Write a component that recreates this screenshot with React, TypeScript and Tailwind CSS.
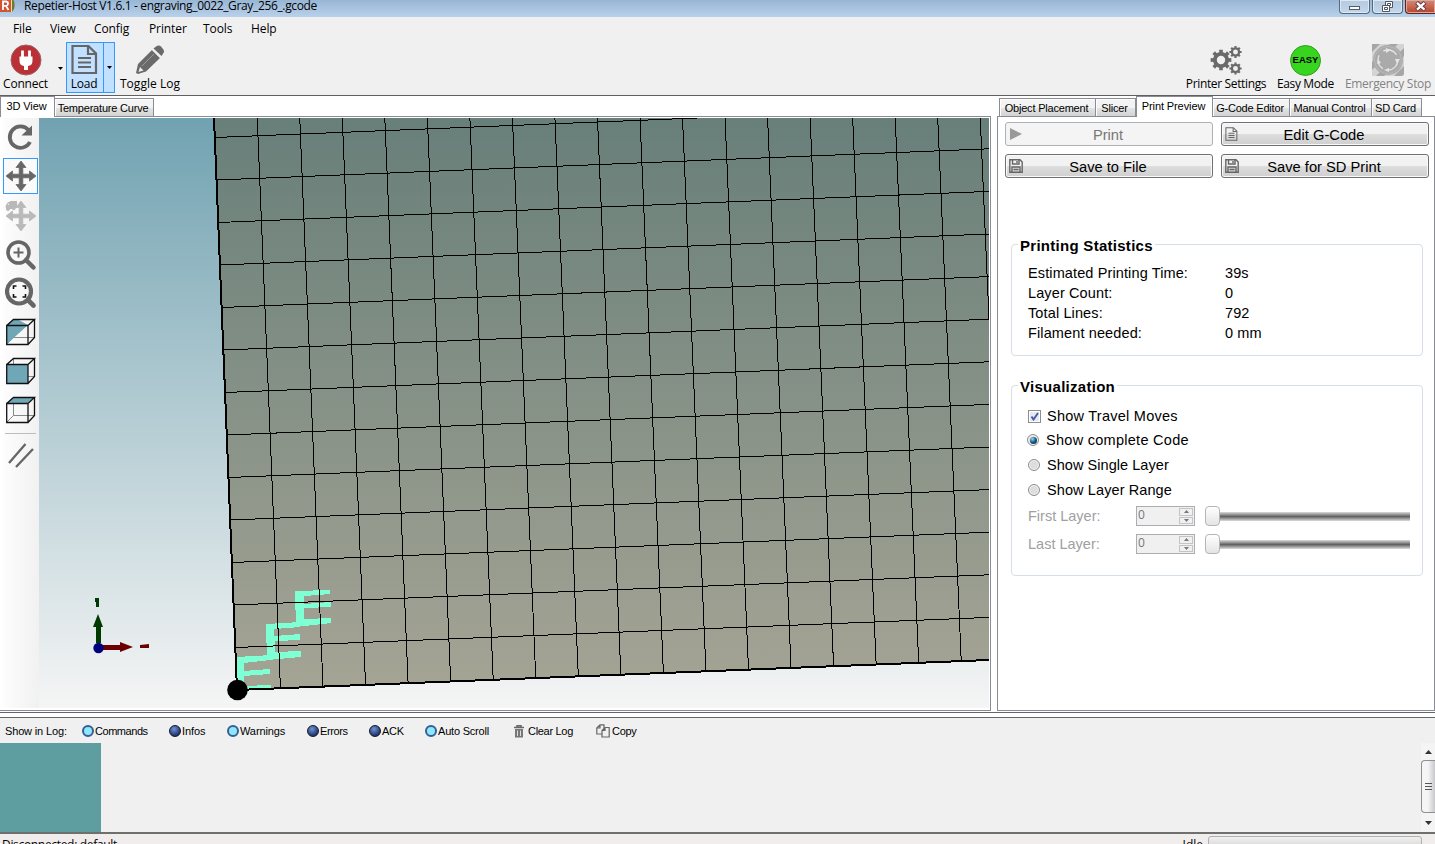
import React from "react";

const MENU: [string, string][] = [
  ["File", "w-[37px]"],
  ["View", "w-[44px]"],
  ["Config", "w-[55px]"],
  ["Printer", "w-[54px]"],
  ["Tools", "w-[48px]"],
  ["Help", "w-[40px]"],
];

const UI = "font-['Open_Sans',sans-serif]";

function TitleBar() {
  return (
    <div className="relative flex h-[17px] shrink-0 bg-gradient-to-b from-[#98b6d5] to-[#b9d1ea]">
      <svg className="h-[13px] w-[16px]" viewBox="0 0 16 13">
        <rect width="11" height="12" fill="#d0542f" />
        <path d="M3 10V1.5H6.2Q8.3 1.8 8 4Q7.8 5.6 6 5.8H3M6 6L8.5 10" fill="none" stroke="#fff" strokeWidth="1.8" />
        <path d="M12 0H13.5Q15.5 4 14 9L12 12Z" fill="#6d7b35" />
        <path d="M11 0H12V12H11Z" fill="#f3d8a0" />
      </svg>
      <span className={`${UI} ml-2 -mt-[3px] text-xs leading-[18px] tracking-[-0.35px] whitespace-nowrap`}>
        Repetier-Host V1.6.1 - engraving_0022_Gray_256_.gcode
      </span>
      <div className="ml-auto flex h-[14px] gap-[2px]">
        <div className="flex w-[31px] items-center justify-center rounded-b border border-t-0 border-[#54687f] bg-gradient-to-b from-[#b5c9df] to-[#c3d6ea] shadow-[inset_0_0_0_1px_#dce8f4]">
          <div className="mt-[2px] h-[4px] w-[11px] border border-[#555b66] bg-white" />
        </div>
        <div className="flex w-[31px] items-center justify-center rounded-b border border-t-0 border-[#54687f] bg-gradient-to-b from-[#b5c9df] to-[#c3d6ea] shadow-[inset_0_0_0_1px_#dce8f4]">
          <svg width="13" height="12" viewBox="0 0 13 12">
            <path d="M4.5 0.5h7v6h-7zM6.5 2.5h3v2h-3z" fill="#fff" stroke="#4d5561" />
            <path d="M1.500 4.500h7v6h-7zM3.500 6.500h3v2h-3z" fill="#fff" stroke="#4d5561" />
          </svg>
        </div>
        <div className="flex w-[30px] items-center justify-center rounded-bl border border-t-0 border-r-0 border-[#5a2420] bg-gradient-to-b from-[#cf8a7b] to-[#bb4026] shadow-[inset_0_0_0_1px_#e0a89d]">
          <svg width="14" height="11" viewBox="0 0 14 11">
            <path d="M2.500 1.500L11 9M11 1.500L2.500 9" stroke="#5b3a3e" strokeWidth="4.200" />
            <path d="M3 1.800L10.500 8.700M10.500 1.800L3 8.700" stroke="#fff" strokeWidth="2.300" />
          </svg>
        </div>
      </div>
    </div>
  );
}

function DocIcon({ className }: { className: string }) {
  return (
    <svg className={className} viewBox="0 0 27 30" fill="none" stroke="#666" strokeWidth="2.200">
      <path d="M1.500 1.500H17.500L25 9V28.500H1.500Z" />
      <path d="M17 2V9.500H25" />
      <path d="M7 13.500H20M7 18H20M7 22.500H20" />
    </svg>
  );
}

function gearPath(cx: number, cy: number, r: number, teeth: number) {
  const pts: string[] = [];
  for (let i = 0; i < teeth; i++) {
    const a = (i * 2 * Math.PI) / teeth;
    const w = Math.PI / teeth;
    const ring: [number, number][] = [[-0.95, 0.76], [-0.55, 0.76], [-0.46, 1], [0.46, 1], [0.55, 0.76], [0.95, 0.76]];
    for (const [o, k] of ring) {
      pts.push(`${(cx + Math.cos(a + o * w) * r * k).toFixed(2)} ${(cy + Math.sin(a + o * w) * r * k).toFixed(2)}`);
    }
  }
  const h = r * 0.4;
  return `M${pts.join("L")}Z M${cx - h} ${cy}a${h} ${h} 0 1 0 ${2 * h} 0a${h} ${h} 0 1 0 ${-2 * h} 0Z`;
}

function ToolBar() {
  const label = `${UI} text-xs leading-[15px] whitespace-nowrap`;
  return (
    <div className="flex h-[55px] shrink-0 border-b border-[#606060] bg-[#f0f0f0]">
      <div className="flex w-[51px] flex-col items-center pt-[3px]">
        <svg width="32" height="32" viewBox="0 0 32 32">
          <circle cx="16" cy="16" r="15" fill="#b93037" stroke="#9f6265" />
          <path d="M12.500 6.500v7M19.500 6.500v7" stroke="#fff" strokeWidth="2.800" />
          <path d="M9.500 12.500h13v4q0 5-4.500 5.500v4h-4v-4q-4.500-.5-4.500-5.500z" fill="#fff" />
        </svg>
        <span className={`${label} tracking-[-0.2px]`}>Connect</span>
      </div>
      <div className="flex w-[15px] items-center justify-center pl-[4px]">
        <svg width="5" height="3"><path d="M0 0h5L2.500 3z" /></svg>
      </div>
      <div className="mt-[1px] flex h-[51px] w-[49px] border border-[#3399ff] bg-[#c2e0ff]">
        <div className="flex w-[37px] flex-col items-center border-r border-[#3399ff] pt-[1px] pr-[2px]">
          <DocIcon className="mb-[1px] h-[31px] w-[27px]" />
          <span className={`${label} tracking-[-0.2px]`}>Load</span>
        </div>
        <div className="flex flex-1 items-center justify-center">
          <svg width="5" height="3"><path d="M0 0h5L2.500 3z" /></svg>
        </div>
      </div>
      <div className="flex w-[70px] flex-col items-center pt-[3px]">
        <svg width="32" height="32" viewBox="0 0 32 32">
          <path d="M2 29L4 20L18 6L26 14L12 27.500L4 30Z" fill="#6a6a6a" />
          <path d="M4.500 28L6 23L9.500 26.500Z" fill="#eee" />
          <path d="M19.500 4.500L22 2.500Q25 .5 27 2.500L29 5Q31 7 29.500 9L27.500 12Z" fill="#6a6a6a" />
          <path d="M18.500 5.500L26.500 13.500" stroke="#f0f0f0" strokeWidth="1.500" />
          <path d="M8 22L20 10" stroke="#999" />
        </svg>
        <span className={`${label} tracking-[0.03px]`}>Toggle Log</span>
      </div>
      <div className="ml-auto flex pr-[4px]">
        <div className="flex w-[82px] flex-col items-center pt-[3px]">
          <svg className="ml-px" width="32" height="32" viewBox="0 0 32 32">
            <path d={gearPath(11, 16, 10.5, 8)} fill="#6a6a6a" fillRule="evenodd" />
            <path d={gearPath(25.5, 8, 6.2, 8)} fill="#6a6a6a" fillRule="evenodd" />
            <path d={gearPath(25.5, 24.5, 6.2, 8)} fill="#6a6a6a" fillRule="evenodd" />
          </svg>
          <span className={`${label} pl-[2px] tracking-[-0.35px]`}>Printer Settings</span>
        </div>
        <div className="ml-[9px] flex w-[60px] flex-col items-center pt-[3px]">
          <div className="ml-px flex h-[32px] items-center">
            <div className="flex size-[31px] items-center justify-center rounded-full border border-[#319d23] bg-[#38d51e] font-['Liberation_Sans',sans-serif] text-[9.5px] font-bold">EASY</div>
          </div>
          <span className={`${label} pl-px tracking-[-0.37px]`}>Easy Mode</span>
        </div>
        <div className="ml-[9px] flex w-[87px] flex-col items-center pt-[3px]">
          <svg width="32" height="32" viewBox="0 0 32 32">
            <rect width="32" height="32" fill="#d4d4d4" />
            <path d="M0 0H8L0 8ZM18 0H26L0 26V18ZM32 4V12L12 32H4ZM32 22V30L30 32H22Z" fill="#a6a6a6" />
            <circle cx="16" cy="16" r="15" fill="#aaa" />
            <circle cx="16" cy="16" r="13.500" fill="none" stroke="#b8b8b8" />
            <circle cx="16" cy="16" r="10" fill="none" stroke="#e4e4e4" strokeWidth="1.300" strokeDasharray="15 6" />
            <path d="M14 4l5 2-5 3zM28 15l-3 5-2-5zM5 20l1-5 3 4zM17 24l-5 2 5 2z" fill="#e4e4e4" />
          </svg>
          <span className={`${label} pl-px tracking-[-0.3px] text-[#838383]`}>Emergency Stop</span>
        </div>
      </div>
    </div>
  );
}

function Tab({ text, width, active }: { text: string; width: string; active?: boolean }) {
  return active ? (
    <div className={`${width} z-10 -mb-px flex h-[21px] justify-center self-end border-x border-t border-[#898c95] bg-white pr-[2px] text-[11px] leading-[19px] tracking-[-0.1px] whitespace-nowrap`}>{text}</div>
  ) : (
    <div className={`${width} -ml-px flex h-[18px] justify-center self-end border-x border-t border-[#898c95] bg-gradient-to-b from-[#f3f3f3] from-50% via-[#e3e3e3] via-55% to-[#d3d3d3] pr-[2px] text-[11px] leading-[18px] tracking-[-0.2px] whitespace-nowrap shadow-[inset_1px_1px_0_#fff]`}>{text}</div>
  );
}

function Cube({ face }: { face: "split" | "front" | "top" }) {
  return (
    <svg width="32" height="30" viewBox="0 0 32 30" className="block">
      <path d="M8.500 2V20.500H29M8.500 20.500L2 27" fill="none" stroke="#888" strokeWidth="1" />
      {face === "split" && <path d="M2 8L8.500 2H12L23 8L2 27Z" fill="#6fa7b7" />}
      {face === "front" && <path d="M2 8H23V27.500H2Z" fill="#6fa7b7" />}
      {face === "top" && <path d="M2 8L8.500 2H29.500L23 8Z" fill="#6fa7b7" />}
      <path d="M1.700 8.500H23V27.500H1.700ZM1.700 8.500L8.500 2.500H29.500L23 8.500M29.500 2.500V20.500L23 27.500" fill="none" stroke="#111" strokeWidth="1.300" />
    </svg>
  );
}

function MoveArrows({ color }: { color: string }) {
  return (
    <path d="M16 1L21 7.500H17.800V14.200H24.500V11L31 16L24.500 21V17.800H17.800V24.500H21L16 31L11 24.500H14.200V17.800H7.500V21L1 16L7.500 11V14.200H14.200V7.500H11Z" fill={color} stroke={color} strokeWidth=".8" strokeLinejoin="round" />
  );
}

function SideTools() {
  return (
    <div className="ml-[3px] flex w-[36px] shrink-0 flex-col items-center bg-gradient-to-r from-[#fdfdfd] to-[#f1f1f1] pr-px">
      <div className="flex h-[39px] items-center">
        <svg className="-ml-px" width="32" height="32" viewBox="0 0 32 32">
          <path d="M24.500 8A10.700 10.700 0 1 0 26 20" fill="none" stroke="#666" strokeWidth="3.800" />
          <path d="M28 3.500V13.500H17.500Z" fill="#666" />
        </svg>
      </div>
      <div className="mt-px flex h-[36px] w-[35px] items-center justify-center border border-[#3399ff] bg-[#fafafa]">
        <svg width="32" height="32" viewBox="0 0 32 32"><MoveArrows color="#666" /></svg>
      </div>
      <div className="flex h-[43px] items-center">
        <svg width="32" height="32" viewBox="0 0 32 32">
          <MoveArrows color="#b9b9b9" />
          <path d="M.5 6L3 2H5V1H12V8H10.800A2 2 0 0 1 7 9H5A2 2 0 0 1 1 9Z" fill="#b9b9b9" />
          <path d="M2.500 5L4 3V5Z" fill="#eee" />
        </svg>
      </div>
      <div className="flex h-[36px] items-center">
        <svg width="32" height="32" viewBox="0 0 32 32" fill="none" stroke="#666">
          <circle cx="13.500" cy="13.500" r="10.500" strokeWidth="3.600" />
          <path d="M21 21L28.500 28.500" strokeWidth="4.500" strokeLinecap="round" />
          <path d="M13.500 8.500V18.500M8.500 13.500H18.500" strokeWidth="2" />
        </svg>
      </div>
      <div className="flex h-[39px] items-center">
        <svg width="32" height="32" viewBox="0 0 32 32" fill="none" stroke="#666">
          <circle cx="14" cy="14.500" r="12" strokeWidth="4.200" />
          <path d="M23 23L28.500 28.500" strokeWidth="4.600" strokeLinecap="round" />
          <path d="M8.500 12V9H11.500M17.500 9H20.500V12M20.500 17V20H17.500M11.500 20H8.500V17" stroke="#111" strokeWidth="1.600" />
        </svg>
      </div>
      <div className="mt-[5px] flex flex-col gap-[9px]">
        <Cube face="split" />
        <Cube face="front" />
        <Cube face="top" />
      </div>
      <div className="mt-[8px] h-px w-[31px] bg-[#bdbdbd]" />
      <svg className="mt-[5px]" width="32" height="32" viewBox="0 0 32 32">
        <path d="M4 24L20.500 5M11 28L28 10" stroke="#666" strokeWidth="2.300" />
      </svg>
    </div>
  );
}

/* Print bed, projected slightly rotated; coordinates are relative to the viewport. */
function Bed() {
  const columns = Array.from({ length: 19 }, (_, i) => i).slice(1);
  const rows = Array.from({ length: 14 }, (_, i) => i).slice(1);
  return (
    <svg className="block h-[590px] w-[950px]" viewBox="39 118 950 590">
      <defs>
        <linearGradient id="sky" x1="0" y1="0" x2="0" y2="1">
          <stop offset="0" stopColor="#71a2b1" />
          <stop offset="1" stopColor="#f5f5f5" />
        </linearGradient>
        <linearGradient id="plate" gradientUnits="userSpaceOnUse" x1="0" y1="118" x2="0" y2="690">
          <stop offset="0" stopColor="#687f79" />
          <stop offset="1" stopColor="#a5a495" />
        </linearGradient>
      </defs>
      <rect x="39" y="118" width="950" height="590" fill="url(#sky)" />
      <path d="M214 118H989V660L237 690Z" fill="url(#plate)" />
      <g fill="#7fffd4" shapeRendering="crispEdges">
        <path d="M237 657L271 655V660L244 663V671L270 669V674L244 676V686L271 685V689L237 691Z" />
        <path d="M266 624L300 622V627L274 629V636L300 634V640L275 641V652L301 651V657L267 660Z" />
        <path d="M295 591L330 590V594L304 596V604L331 602V607L304 608V619L331 618V623L296 627Z" />
      </g>
      <g stroke="#000" strokeWidth="1" shapeRendering="crispEdges">
        {columns.map((n) => (
          <line key={n} x1={214.7 + 42.53 * n} y1="118" x2={237.9 + 42.55 * n} y2={690 - 1.7 * n} />
        ))}
        {rows.map((k) => (
          <line key={k} x1={237 - 1.709 * k} y1={690 - 42.5 * k} x2="989" y2={660 - 42.6 * k} />
        ))}
      </g>
      <path d="M214 118L237 690L989 660" fill="none" stroke="#000" strokeWidth="2" shapeRendering="crispEdges" />
      <circle cx="237.500" cy="690" r="10.300" />
      <path d="M95 598H99V607H96V602H95Z M96 625H101V643H96Z M98 614L103 627H93Z" fill="#003a00" />
      <path d="M102 645H120V650H102Z M120 642L133 647L120 652Z M140 645L149 644V648H140Z" fill="#6c0000" />
      <circle cx="98.500" cy="648" r="5.200" fill="#00007f" />
    </svg>
  );
}

function SaveIcon() {
  return (
    <svg width="14" height="14" viewBox="0 0 14 14" fill="none" stroke="#666" strokeWidth="1.400">
      <path d="M.8.8H11L13.200 3V13.200H.8ZM3.500 1V5H10V1M3 13V8H11V13M4.500 10.500H9.500" />
      <path d="M8 2v2" />
    </svg>
  );
}

function Btn({ text, icon, disabled }: { text: string; icon: React.ReactNode; disabled?: boolean }) {
  return (
    <button
      className={
        disabled
          ? "flex h-[24px] w-[208px] items-center rounded-[3px] border border-[#adb2b5] bg-[#f4f4f4] pl-[3px] text-[#777]"
          : "flex h-[24px] w-[208px] items-center rounded-[3px] border border-[#707070] bg-gradient-to-b from-[#f2f2f2] from-50% via-[#dddddd] via-52% to-[#cfcfcf] pl-[3px] shadow-[inset_0_0_0_1px_#fafafa]"
      }
    >
      <span className="w-[14px]">{icon}</span>
      <span className="flex-1 pt-px pr-[19px] text-center text-[14.7px] leading-5 whitespace-nowrap">{text}</span>
    </button>
  );
}

function Group({ title, className, children }: { title: string; className: string; children: React.ReactNode }) {
  return (
    <section className={`${className} relative ml-[13px] w-[412px] rounded border border-[#d5dfe5]`}>
      <h2 className="absolute -top-[9px] left-[6px] bg-white px-[2px] text-[15px] leading-[20px] font-bold tracking-[0.28px] whitespace-nowrap">{title}</h2>
      {children}
    </section>
  );
}

function Radio({ text, checked, className }: { text: string; checked?: boolean; className: string }) {
  return (
    <div className={`${className} flex items-center whitespace-nowrap`}>
      <span className="mr-[7px] flex size-[12px] items-center justify-center rounded-full border border-[#8e8f8f] bg-[#ddd] shadow-[inset_0_0_0_1px_#f5f5f5]">
        {checked && <span className="size-[7px] rounded-full bg-[radial-gradient(circle_at_35%_30%,#8fdcf5,#12577c_50%,#0a2d49)]" />}
      </span>
      {text}
    </div>
  );
}

function LayerRow({ text, className }: { text: string; className: string }) {
  return (
    <div className={`${className} flex h-[20px] items-center`}>
      <span className="w-[108px] text-[#a0a0a0]">{text}</span>
      <div className="flex h-[20px] w-[59px] border border-[#abadb3] bg-[#f0f0f0] p-px">
        <span className={`${UI} flex-1 text-[12px] leading-[14px] text-[#777]`}>0</span>
        <div className="flex w-[14px] flex-col gap-px">
          <div className="flex flex-1 items-center justify-center border border-[#c4c4c4]"><svg width="5" height="3"><path d="M0 3h5L2.500 0z" fill="#777" /></svg></div>
          <div className="flex flex-1 items-center justify-center border border-[#c4c4c4]"><svg width="5" height="3"><path d="M0 0h5L2.500 3z" fill="#777" /></svg></div>
        </div>
      </div>
      <div className="ml-[10px] h-[20px] w-[15px] rounded-[4px] border border-[#b5b5b5] bg-gradient-to-b from-white to-[#e4e4e4]" />
      <div className="h-[9px] w-[190px] bg-gradient-to-b from-[#ddd] via-[#626262] to-[#ddd]" />
    </div>
  );
}

function PrintPanel() {
  const stats: [string, string][] = [
    ["Estimated Printing Time:", "39s"],
    ["Layer Count:", "0"],
    ["Total Lines:", "792"],
    ["Filament needed:", "0 mm"],
  ];
  return (
    <div className="flex-1 border border-[#898c95] bg-white pt-[5px]">
      <div className="ml-[7px] grid grid-cols-[208px_208px] gap-x-2 gap-y-2">
        <Btn text="Print" disabled icon={<svg width="14" height="14" viewBox="0 0 14 14"><path d="M1 1L13 7L1 13Z" fill="#999" /></svg>} />
        <Btn text="Edit G-Code" icon={<DocIcon className="h-[14px] w-[13px]" />} />
        <Btn text="Save to File" icon={<SaveIcon />} />
        <Btn text="Save for SD Print" icon={<SaveIcon />} />
      </div>
      <Group title="Printing Statistics" className="mt-[66px] h-[112px]">
        <div className="pt-[18px] pl-[16px] text-[14.5px] leading-[20px] tracking-[0.12px]">
          {stats.map(([k, v]) => (
            <div key={k} className="flex"><span className="w-[197px]">{k}</span><span>{v}</span></div>
          ))}
        </div>
      </Group>
      <Group title="Visualization" className="mt-[29px] h-[191px]">
        <div className="pt-[20px] pl-[16px] text-[14.5px] leading-[20px] tracking-[0.25px]">
          <div className="flex items-center whitespace-nowrap">
            <span className="mr-[6px] flex size-[13px] items-center justify-center border border-[#8e8f8f] bg-[#e6e9ef] shadow-[inset_0_0_0_1px_#fff]">
              <svg width="9" height="9" viewBox="0 0 9 9"><path d="M1.500 4.500L3.500 7.500L8 1" fill="none" stroke="#4759a6" strokeWidth="1.900" /></svg>
            </span>
            Show Travel Moves
          </div>
          <Radio text="Show complete Code" checked className="mt-[4px] -ml-px tracking-[0.28px]" />
          <Radio text="Show Single Layer" className="mt-[5px] tracking-[0.05px]" />
          <Radio text="Show Layer Range" className="mt-[5px] tracking-[0.1px]" />
          <LayerRow text="First Layer:" className="mt-[6px] tracking-[0px]" />
          <LayerRow text="Last Layer:" className="mt-[8px] tracking-[0px]" />
        </div>
      </Group>
    </div>
  );
}

function LogToggle({ text, on, width }: { text: string; on: boolean; width: string }) {
  return (
    <div className={`${width} flex items-center`}>
      <span
        className={
          on
            ? "mr-px size-[12px] rounded-full border-2 border-[#335f91] bg-[#8fe6ff]"
            : "mr-px size-[12px] rounded-full border-[1.5px] border-[#111827] bg-[radial-gradient(circle_at_40%_30%,#6d93d6,#1e3168_75%)]"
        }
      />
      {text}
    </div>
  );
}

function LogBar() {
  return (
    <div className="flex h-[25px] shrink-0 items-center pt-px pl-[5px] text-[11px] tracking-[-0.3px] whitespace-nowrap">
      <span className="w-[77px] tracking-[-0.15px]">Show in Log:</span>
      <LogToggle text="Commands" on width="w-[87px] tracking-[-0.45px]" />
      <LogToggle text="Infos" on={false} width="w-[58px] tracking-[-0.1px]" />
      <LogToggle text="Warnings" on width="w-[80px] tracking-[-0.1px]" />
      <LogToggle text="Errors" on={false} width="w-[62px] tracking-[-0.4px]" />
      <LogToggle text="ACK" on={false} width="w-[56px] tracking-[-0.3px]" />
      <LogToggle text="Auto Scroll" on width="w-[88px] tracking-[-0.2px]" />
      <div className="flex w-[83px] items-center">
        <svg className="mr-[3px]" width="12" height="13" viewBox="0 0 12 13">
          <path d="M1 2.500H11M4 2V.8H8V2" fill="none" stroke="#666" strokeWidth="1.500" />
          <path d="M2 4H10V12.500H2Z" fill="#777" />
          <path d="M4.500 5.500V11M7.500 5.500V11" stroke="#ddd" />
        </svg>
        Clear Log
      </div>
      <div className="flex items-center">
        <svg className="mr-[2px]" width="14" height="14" viewBox="0 0 14 14" fill="#f0f0f0" stroke="#666" strokeWidth="1.200">
          <path d="M4 .8H8V10H.8V4ZM4 1V4H1" />
          <path d="M9 3.500H13.200V13H6V6.500ZM9 4V6.500H6" />
        </svg>
        Copy
      </div>
    </div>
  );
}

export default function App() {
  return (
    <div className="flex h-[844px] w-[1435px] flex-col overflow-hidden bg-[#f0f0f0] font-['Liberation_Sans',sans-serif] text-black">
      <TitleBar />
      <nav className={`${UI} flex h-[24px] shrink-0 pl-[13px] text-xs leading-[24px] tracking-[-0.1px]`}>
        {MENU.map(([m, w]) => (
          <span key={m} className={w}>{m}</span>
        ))}
      </nav>
      <ToolBar />
      <main className="flex h-[616px] shrink-0 gap-[6px] bg-white pb-px">
        <div className="flex w-[991px] flex-col">
          <div className="flex h-[20px] shrink-0">
            <Tab text="3D View" width="w-[55px]" active />
            <Tab text="Temperature Curve" width="w-[100px]" />
          </div>
          <div className="flex flex-1 border-t border-r border-b border-[#898c95] pt-px pb-[2px]">
            <SideTools />
            <Bed />
          </div>
        </div>
        <div className="flex w-[438px] flex-col">
          <div className="flex h-[20px] shrink-0 pl-[3px]">
            <Tab text="Object Placement" width="w-[97px]" />
            <Tab text="Slicer" width="w-[41px]" />
            <Tab text="Print Preview" width="w-[77px]" active />
            <Tab text="G-Code Editor" width="w-[78px]" />
            <Tab text="Manual Control" width="w-[83px]" />
            <Tab text="SD Card" width="w-[51px]" />
          </div>
          <PrintPanel />
        </div>
      </main>
      <div className="h-[6px] shrink-0 border-y border-[#646469] bg-white" />
      <LogBar />
      <div className="flex h-[89px] shrink-0">
        <div className="w-[101px] bg-[#5f9ea0]" />
        <div className="ml-auto flex w-[14px] flex-col items-center justify-between bg-[#f4f4f4]">
          <svg className="mt-[7px] ml-px" width="7" height="4"><path d="M0 4h7L3.500 0z" fill="#333" /></svg>
          <div className="-mt-[2px] flex h-[53px] w-full flex-col items-center justify-center gap-[2px] rounded-l-sm border border-r-0 border-[#909090] bg-gradient-to-r from-[#f5f5f5] from-45% to-[#c8c8cc]">
            <div className="h-px w-[7px] bg-[#555]" />
            <div className="h-px w-[7px] bg-[#555]" />
            <div className="h-px w-[7px] bg-[#555]" />
          </div>
          <svg className="mb-[7px] ml-px" width="7" height="4"><path d="M0 0h7L3.500 4z" fill="#333" /></svg>
        </div>
      </div>
      <footer className={`${UI} flex h-[30px] shrink-0 border-t-2 border-[#6e706e] bg-[#f1eded] pt-[2px] pl-[2px] text-xs leading-[17px]`}>
        <span className="tracking-[-0.32px]">Disconnected: default</span>
        <span className="mr-[5px] ml-auto">Idle</span>
        <div className="mr-[13px] h-[18px] w-[214px] rounded-[3px] border border-[#b0b0b0] bg-gradient-to-b from-[#f0f0f0] to-[#c9c9c9]" />
      </footer>
    </div>
  );
}
